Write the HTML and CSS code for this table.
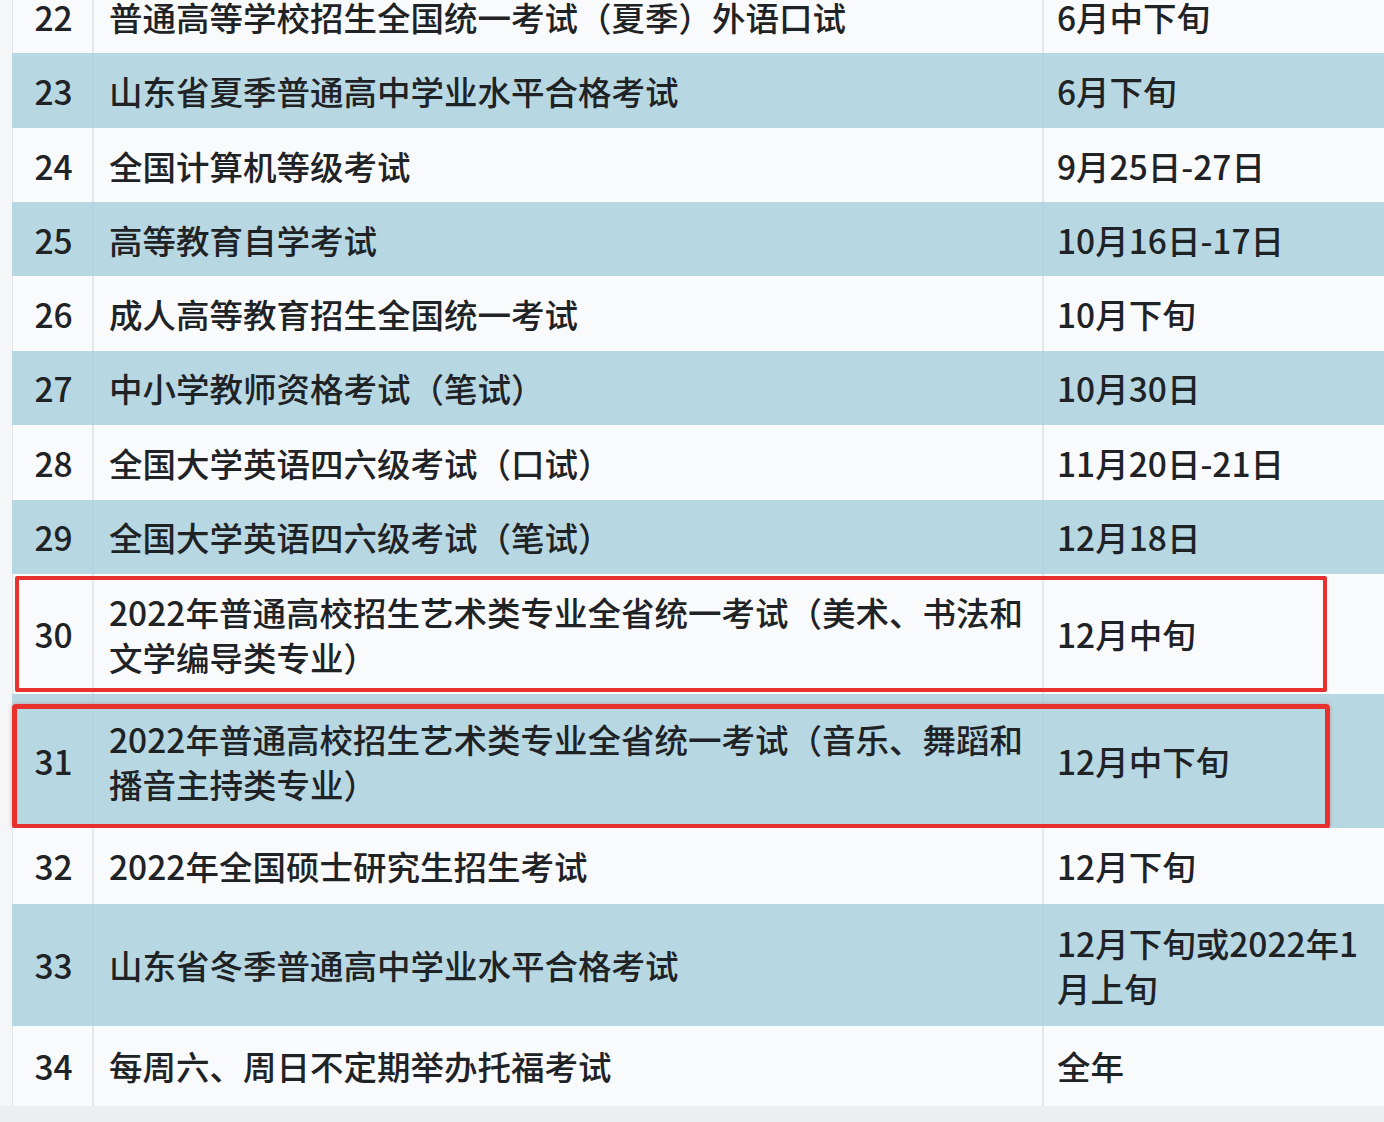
FILE: index.html
```html
<!DOCTYPE html>
<html lang="zh-CN">
<head>
<meta charset="utf-8">
<title>考试安排</title>
<link rel="stylesheet" href="styles.css">
</head>
<body>
<div class="sheet">
  <div class="table">
    <div class="row white h74"><div class="num">22</div><div class="name">普通高等学校招生全国统一考试（夏季）外语口试</div><div class="date">6月中下旬</div></div>
    <div class="row blue h75"><div class="num">23</div><div class="name">山东省夏季普通高中学业水平合格考试</div><div class="date">6月下旬</div></div>
    <div class="row white h74"><div class="num">24</div><div class="name">全国计算机等级考试</div><div class="date">9月25日-27日</div></div>
    <div class="row blue h74"><div class="num">25</div><div class="name">高等教育自学考试</div><div class="date">10月16日-17日</div></div>
    <div class="row white h74"><div class="num">26</div><div class="name">成人高等教育招生全国统一考试</div><div class="date">10月下旬</div></div>
    <div class="row blue h74"><div class="num">27</div><div class="name">中小学教师资格考试（笔试）</div><div class="date">10月30日</div></div>
    <div class="row white h75"><div class="num">28</div><div class="name">全国大学英语四六级考试（口试）</div><div class="date">11月20日-21日</div></div>
    <div class="row blue h74"><div class="num">29</div><div class="name">全国大学英语四六级考试（笔试）</div><div class="date">12月18日</div></div>
    <div class="row white h120"><div class="num">30</div><div class="name">2022年普通高校招生艺术类专业全省统一考试（美术、书法和文学编导类专业）</div><div class="date">12月中旬</div><span class="mark mark-a"></span></div>
    <div class="row blue h134"><div class="num">31</div><div class="name">2022年普通高校招生艺术类专业全省统一考试（音乐、舞蹈和播音主持类专业）</div><div class="date">12月中下旬</div><span class="mark mark-b"></span></div>
    <div class="row white h76"><div class="num">32</div><div class="name">2022年全国硕士研究生招生考试</div><div class="date">12月下旬</div></div>
    <div class="row blue h122"><div class="num">33</div><div class="name">山东省冬季普通高中学业水平合格考试</div><div class="date">12月下旬或2022年1月上旬</div></div>
    <div class="row white h80"><div class="num">34</div><div class="name">每周六、周日不定期举办托福考试</div><div class="date">全年</div></div>
  </div>
</div>
</body>
</html>
```

FILE: styles.css
```css
html, body {
  margin: 0;
  padding: 0;
}

body {
  background: #eceeef;
  font-family: "Noto Sans CJK SC", sans-serif;
  color: #1f2326;
  overflow: hidden;
}

.sheet {
  margin-top: -21px;
  padding-left: 12px;
  background: #f4f6f7;
}

.table {
  display: flex;
  flex-direction: column;
}

.row {
  position: relative;
  display: grid;
  grid-template-columns: 80px 950px 1fr;
  align-items: stretch;
  font-size: 33.5px;
  font-weight: 500;
  line-height: 45px;
}

.row.white {
  background: #f9fafb;
  box-shadow: inset 1px 0 0 #e3e6e8;
}

.row.blue {
  background: #b7d8e2;
}

.h74 { height: 74.3px; }
.h75 { height: 74.6px; }
.h76 { height: 76px; }
.h80 { height: 80px; }
.h120 { height: 120px; }
.h122 { height: 122px; }
.h134 { height: 134px; }

.num,
.name,
.date {
  display: flex;
  align-items: center;
}

.num {
  justify-content: center;
  padding-left: 3px;
}

.name {
  padding: 0 18px 0 15px;
}

.date {
  padding: 0 10px 0 13px;
}

.row.white .name,
.row.white .date {
  border-left: 2px solid #e4e7e9;
}

.row.blue .name,
.row.blue .date {
  border-left: 2px solid #b3d4de;
}

.mark {
  position: absolute;
  border: 4px solid #e8302e;
  pointer-events: none;
}

.mark-a {
  top: 2px;
  left: 3px;
  right: 57px;
  bottom: 2px;
  border-radius: 2px;
}

.mark-b {
  top: 10px;
  left: 0;
  right: 54px;
  bottom: -1px;
  border-width: 5px;
  border-radius: 4px;
  box-shadow: 0 0 4px rgba(232, 48, 46, 0.35);
}
```
